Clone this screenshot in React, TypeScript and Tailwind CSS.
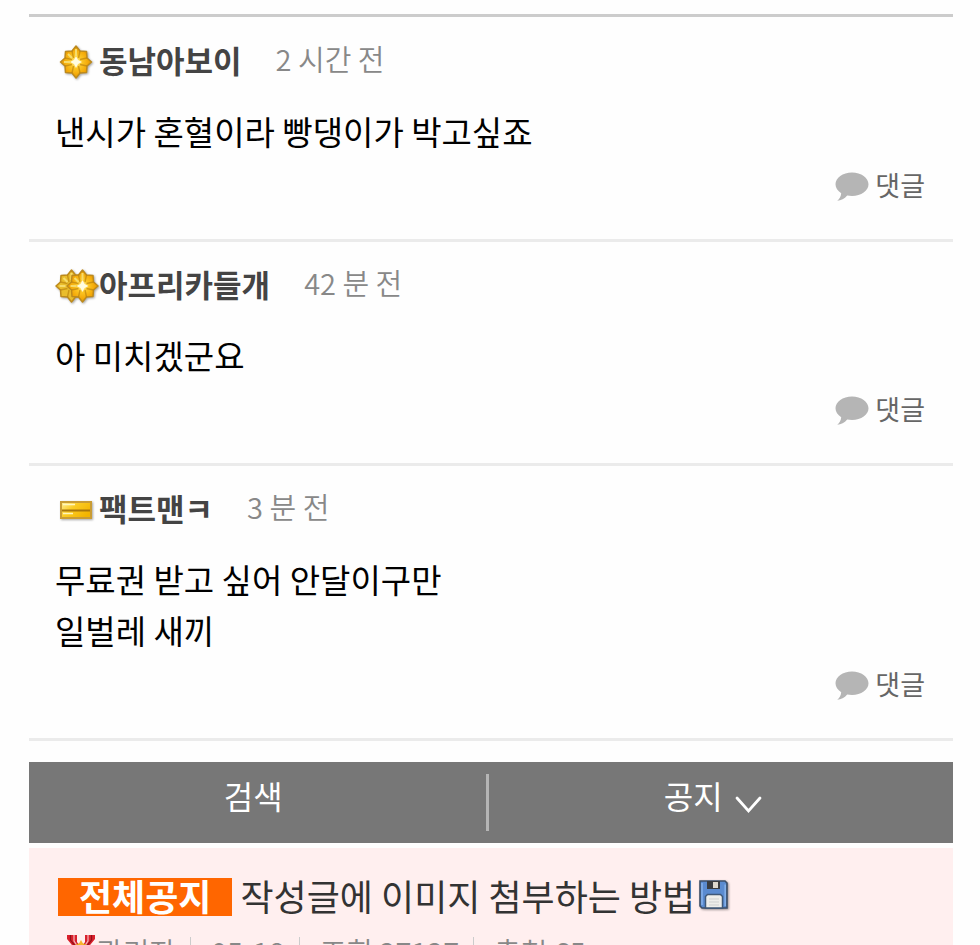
import type React from "react"

interface Comment {
  id: number
  author: string
  icon: React.ReactNode
  time: string
  lines: string[]
}

function GoldGradient({ id }: { id: string }) {
  return (
    <defs>
      <radialGradient id={id} cx="50%" cy="50%" r="55%">
        <stop offset="0" stopColor="#fff3a8" />
        <stop offset="0.35" stopColor="#fcc624" />
        <stop offset="0.75" stopColor="#f2a505" />
        <stop offset="1" stopColor="#d9940c" />
      </radialGradient>
    </defs>
  )
}

// Eight-petal rank flower, drawn around its own centre
function Flower({ fill, bright }: { fill: string; bright: boolean }) {
  return (
    <>
      <path
        d="M0-16 4-11 10.5-10.5 11-4 15.5 0 11 4 10.5 10.5 4 11 0 16-4 11-10.5 10.5-11 4-15.5 0-11-4-10.5-10.5-4-11Z"
        fill={fill}
        stroke="#bd8a1c"
        strokeWidth="1.5"
        strokeLinejoin="round"
      />
      <path
        d="M-4-11-2.5-4M4-11 2.5-4M-4 11-2.5 4M4 11 2.5 4M-11-4-4-2.5M11-4 4-2.5M-11 4-4 2.5M11 4 4 2.5"
        fill="none"
        stroke="#b9800c"
        strokeOpacity="0.65"
        strokeWidth="1.4"
      />
      <path d="M0-13V-6M-12 0H-6M-8-8-4-4" stroke="#f6dc6c" strokeWidth="2" />
      <path d="M0-6 2-2 6 0 2 2 0 6-2 2-6 0-2-2Z" fill={bright ? "#fffce0" : "#f4d250"} />
    </>
  )
}

function SingleFlowerIcon() {
  return (
    <svg width="44" height="36" viewBox="0 0 44 36" aria-hidden="true" className="drop-shadow-[1px_1px_1px_rgba(0,0,0,0.35)]">
      <GoldGradient id="gold-single" />
      <g transform="translate(21 18)">
        <Flower fill="url(#gold-single)" bright />
      </g>
    </svg>
  )
}

function DoubleFlowerIcon() {
  return (
    <svg width="44" height="36" viewBox="0 0 44 36" aria-hidden="true" className="drop-shadow-[1px_1px_1px_rgba(0,0,0,0.35)]">
      <GoldGradient id="gold-double" />
      <g transform="translate(16.5 18)">
        <Flower fill="#e9bd2c" bright={false} />
      </g>
      <g transform="translate(27.5 18)">
        <Flower fill="url(#gold-double)" bright />
      </g>
    </svg>
  )
}

function GoldBarIcon() {
  return (
    <svg width="44" height="36" viewBox="0 0 44 36" aria-hidden="true" className="drop-shadow-[1px_1px_1px_rgba(0,0,0,0.35)]">
      <defs>
        <linearGradient id="bar-fill" x1="0" y1="0" x2="1" y2="0.6">
          <stop offset="0" stopColor="#ffef9a" />
          <stop offset="0.45" stopColor="#fbcb22" />
          <stop offset="1" stopColor="#f3b400" />
        </linearGradient>
      </defs>
      <rect x="6" y="10" width="30" height="16" fill="url(#bar-fill)" stroke="#c99c34" strokeWidth="2" />
      <path d="M7 18.5H35" stroke="#a8770c" strokeWidth="2" />
      <path d="M8 12.5H20M8 21.5H18" stroke="#fff6bd" strokeWidth="1.5" />
    </svg>
  )
}

function BubbleIcon() {
  return (
    <svg width="34" height="30" viewBox="0 0 34 30" aria-hidden="true" fill="#b5b5b5">
      <path d="M17 0.5C26.2 0.5 33.5 5.7 33.5 12.3S26.2 24 17 24C15.3 24 13.7 23.8 12.2 23.5C9.5 26.7 6 28.6 2.3 28.8C4.5 26.8 6 24.2 6.2 21.2C2.7 19 0.5 15.9 0.5 12.3C0.5 5.7 7.8 0.5 17 0.5Z" />
    </svg>
  )
}

function FloppyIcon() {
  return (
    <svg width="30" height="30" viewBox="0 0 30 30" role="img" aria-label="첨부파일" className="drop-shadow-[1px_1px_1px_rgba(0,0,0,0.4)]">
      <path d="M1 1H26L28 3V28H3L1 26Z" fill="#5a8bd0" stroke="#3c4f68" strokeWidth="1.6" />
      <path d="M3 3V25M26.2 4.5V26" stroke="#86b2ea" strokeWidth="1.5" />
      <rect x="8" y="1" width="13" height="8" fill="#3a3d40" />
      <rect x="14" y="2" width="5" height="6" fill="#ddd8cd" />
      <path d="M6.5 28V16.5L8.5 14.5H21.5L23.5 16.5V28Z" fill="#eeeeea" stroke="#3f5877" strokeWidth="1.5" />
      <path d="M10 19H20M10 22H20M10 25H20" stroke="#cfd1d0" strokeWidth="1" />
    </svg>
  )
}

function MedalIcon() {
  return (
    <svg width="30" height="32" viewBox="0 0 30 32" aria-hidden="true">
      <path d="M1 0H11V7L15 13 10 15 1 4Z" fill="#d9202c" />
      <path d="M29 0H19V7L15 13 20 15 29 4Z" fill="#d9202c" />
      <path d="M4.500 0V5L10 12M25.500 0V5L20 12" fill="none" stroke="#8f1119" strokeWidth="1.2" />
      <path d="M8 0V6L12 12M22 0V6L18 12" fill="none" stroke="#f3b9bb" strokeWidth="1.2" />
      <circle cx="15" cy="19" r="10" fill="#f6b51c" stroke="#e09c10" strokeWidth="1.5" />
      <path d="M15 5 19 12 11 12Z" fill="#f8b52c" />
      <circle cx="15" cy="19" r="5" fill="#fbdc62" />
    </svg>
  )
}

const comments: Comment[] = [
  {
    id: 1,
    author: "동남아보이",
    icon: <SingleFlowerIcon />,
    time: "2 시간 전",
    lines: ["낸시가 혼혈이라 빵댕이가 박고싶죠"],
  },
  {
    id: 2,
    author: "아프리카들개",
    icon: <DoubleFlowerIcon />,
    time: "42 분 전",
    lines: ["아 미치겠군요"],
  },
  {
    id: 3,
    author: "팩트맨ㅋ",
    icon: <GoldBarIcon />,
    time: "3 분 전",
    lines: ["무료권 받고 싶어 안달이구만", "일벌레 새끼"],
  },
]

const noticeMeta = ["관리자", "05-18", "조회 27127", "추천 65"]

function CommentItem({ comment }: { comment: Comment }) {
  return (
    <li className="border-b-3 border-[#ebebeb] px-[26px] pt-6 pb-8">
      <div className="flex h-10 items-center">
        {comment.icon}
        <strong className="pb-1 text-[31px] leading-9 font-bold text-[#444]">{comment.author}</strong>
        <span className="ml-[34px] pb-2 text-[29px] leading-8 font-[350] text-[#888]">{comment.time}</span>
      </div>
      <div className="mt-6 text-[33px] leading-[51px] text-black">
        {comment.lines.map((line) => (
          <p key={line}>{line}</p>
        ))}
      </div>
      <div className="mt-[10px] flex h-10 justify-end pr-[2px]">
        <button type="button" className="flex items-center gap-[6px] text-[27px] leading-9 text-[#666]">
          <BubbleIcon />
          <span className="pb-1">댓글</span>
        </button>
      </div>
    </li>
  )
}

export default function App() {
  return (
    <main className="h-screen overflow-hidden bg-[#fefefe] pt-[14px] pr-[27px] pl-[29px] font-['Noto_Sans_CJK_KR',sans-serif] whitespace-nowrap">
      <ul className="border-t-3 border-[#ccc] pt-px">
        {comments.map((comment) => (
          <CommentItem key={comment.id} comment={comment} />
        ))}
      </ul>

      {/* Search / notice bar */}
      <nav className="mt-[21px] flex h-[81px] items-center bg-[#777] text-[32px] leading-9 text-white">
        <button type="button" className="flex-1 basis-0 pr-2 pb-4">
          검색
        </button>
        <span className="h-[57px] w-[3px] bg-[#b5b5b5]" />
        <button type="button" className="flex flex-1 basis-0 items-center justify-center gap-3 pr-4 pb-4">
          공지
          <svg width="27" height="18" viewBox="0 0 27 18" aria-hidden="true" className="mt-5">
            <path d="M2 2 13.5 15 25 2" fill="none" stroke="#fff" strokeWidth="2.8" strokeLinecap="round" />
          </svg>
        </button>
      </nav>

      {/* Global notice */}
      <section className="mt-[5px] bg-[#ffefef] px-[29px] pt-[29px] pb-6">
        <a href="#notice" className="flex h-10 items-center text-[36px] leading-9 text-[#333]">
          <span className="flex h-[38px] items-center bg-[#ff6600] px-[21px] pb-1 font-bold text-white">전체공지</span>
          <span className="ml-2 pb-1">작성글에 이미지 첨부하는 방법</span>
          <span className="ml-1 pb-1">
            <FloppyIcon />
          </span>
        </a>
        <div className="mt-4 flex h-9 items-center pl-2 text-[29px] leading-9 font-[350] text-[#888]">
          <MedalIcon />
          {noticeMeta.map((item, index) => (
            <span key={item} className="flex items-center">
              {index > 0 && <span className="mr-5 ml-[14px] h-7 w-px bg-[#ccc]" />}
              <span>{item}</span>
            </span>
          ))}
        </div>
      </section>
    </main>
  )
}
